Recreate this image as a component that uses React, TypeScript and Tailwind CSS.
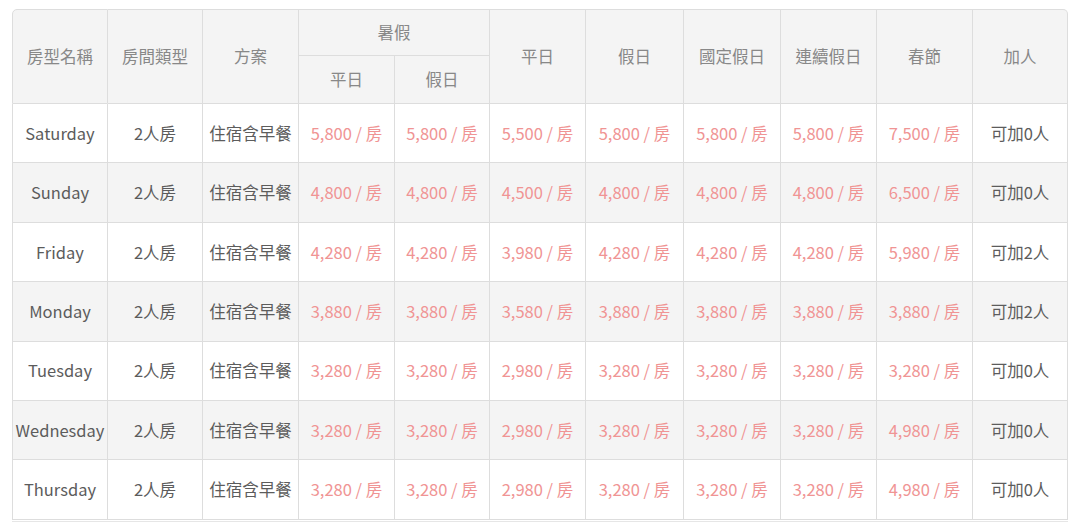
import React from 'react';

type Row = {
  name: string;
  prices: number[];
  extra: string;
};

const rows: Row[] = [
  { name: 'Saturday', prices: [5800, 5800, 5500, 5800, 5800, 5800, 7500], extra: '可加0人' },
  { name: 'Sunday', prices: [4800, 4800, 4500, 4800, 4800, 4800, 6500], extra: '可加0人' },
  { name: 'Friday', prices: [4280, 4280, 3980, 4280, 4280, 4280, 5980], extra: '可加2人' },
  { name: 'Monday', prices: [3880, 3880, 3580, 3880, 3880, 3880, 3880], extra: '可加2人' },
  { name: 'Tuesday', prices: [3280, 3280, 2980, 3280, 3280, 3280, 3280], extra: '可加0人' },
  { name: 'Wednesday', prices: [3280, 3280, 2980, 3280, 3280, 3280, 4980], extra: '可加0人' },
  { name: 'Thursday', prices: [3280, 3280, 2980, 3280, 3280, 3280, 4980], extra: '可加0人' },
];

// column widths measured off the layout
const colWidths = [96, 95, 96, 96, 95, 96, 98, 97, 96, 96, 95];

const th = 'border-r border-b border-[#dddddd] bg-[#f4f4f4] font-normal text-[#888888] text-center p-0';
const td = 'border-r border-b border-[#dddddd] font-normal text-center p-0 whitespace-nowrap';

const App: React.FC = () => {
  return (
    <div
      className="w-[1080px] h-[522px] overflow-hidden bg-white pl-[12px] pt-[9px] text-[16.5px]"
      style={{ fontFamily: '"Noto Sans CJK TC", "Noto Sans", sans-serif' }}
    >
      <table className="w-[1056px] table-fixed border-separate border-spacing-0">
        <colgroup>
          {colWidths.map((w, i) => (
            <col key={i} style={{ width: w }} />
          ))}
        </colgroup>
        <thead>
          <tr className="h-[47px]">
            <th rowSpan={2} className={`${th} border-l border-t rounded-tl-[5px]`}>房型名稱</th>
            <th rowSpan={2} className={`${th} border-t`}>房間類型</th>
            <th rowSpan={2} className={`${th} border-t`}>方案</th>
            <th colSpan={2} className={`${th} border-t`}>暑假</th>
            <th rowSpan={2} className={`${th} border-t`}>平日</th>
            <th rowSpan={2} className={`${th} border-t`}>假日</th>
            <th rowSpan={2} className={`${th} border-t`}>國定假日</th>
            <th rowSpan={2} className={`${th} border-t`}>連續假日</th>
            <th rowSpan={2} className={`${th} border-t`}>春節</th>
            <th rowSpan={2} className={`${th} border-t rounded-tr-[5px]`}>加人</th>
          </tr>
          <tr className="h-[48px]">
            <th className={th}>平日</th>
            <th className={th}>假日</th>
          </tr>
        </thead>
        <tbody>
          {rows.map((r, i) => (
            <tr key={r.name} className={`h-[59.4px] ${i % 2 === 1 ? 'bg-[#f4f4f4]' : 'bg-white'}`}>
              <td className={`${td} border-l text-[#5c5c5c]`}>{r.name}</td>
              <td className={`${td} text-[#5c5c5c]`}>2人房</td>
              <td className={`${td} text-[#5c5c5c]`}>住宿含早餐</td>
              {r.prices.map((p, j) => (
                <td key={j} className={`${td} text-[#f09494]`}>
                  {p.toLocaleString('en-US')} / 房
                </td>
              ))}
              <td className={`${td} text-[#5c5c5c]`}>{r.extra}</td>
            </tr>
          ))}
        </tbody>
      </table>
      <div className="mt-[1px] w-[1056px] h-[3px] bg-[#e6e6e6]" />
    </div>
  );
};

export default App;
